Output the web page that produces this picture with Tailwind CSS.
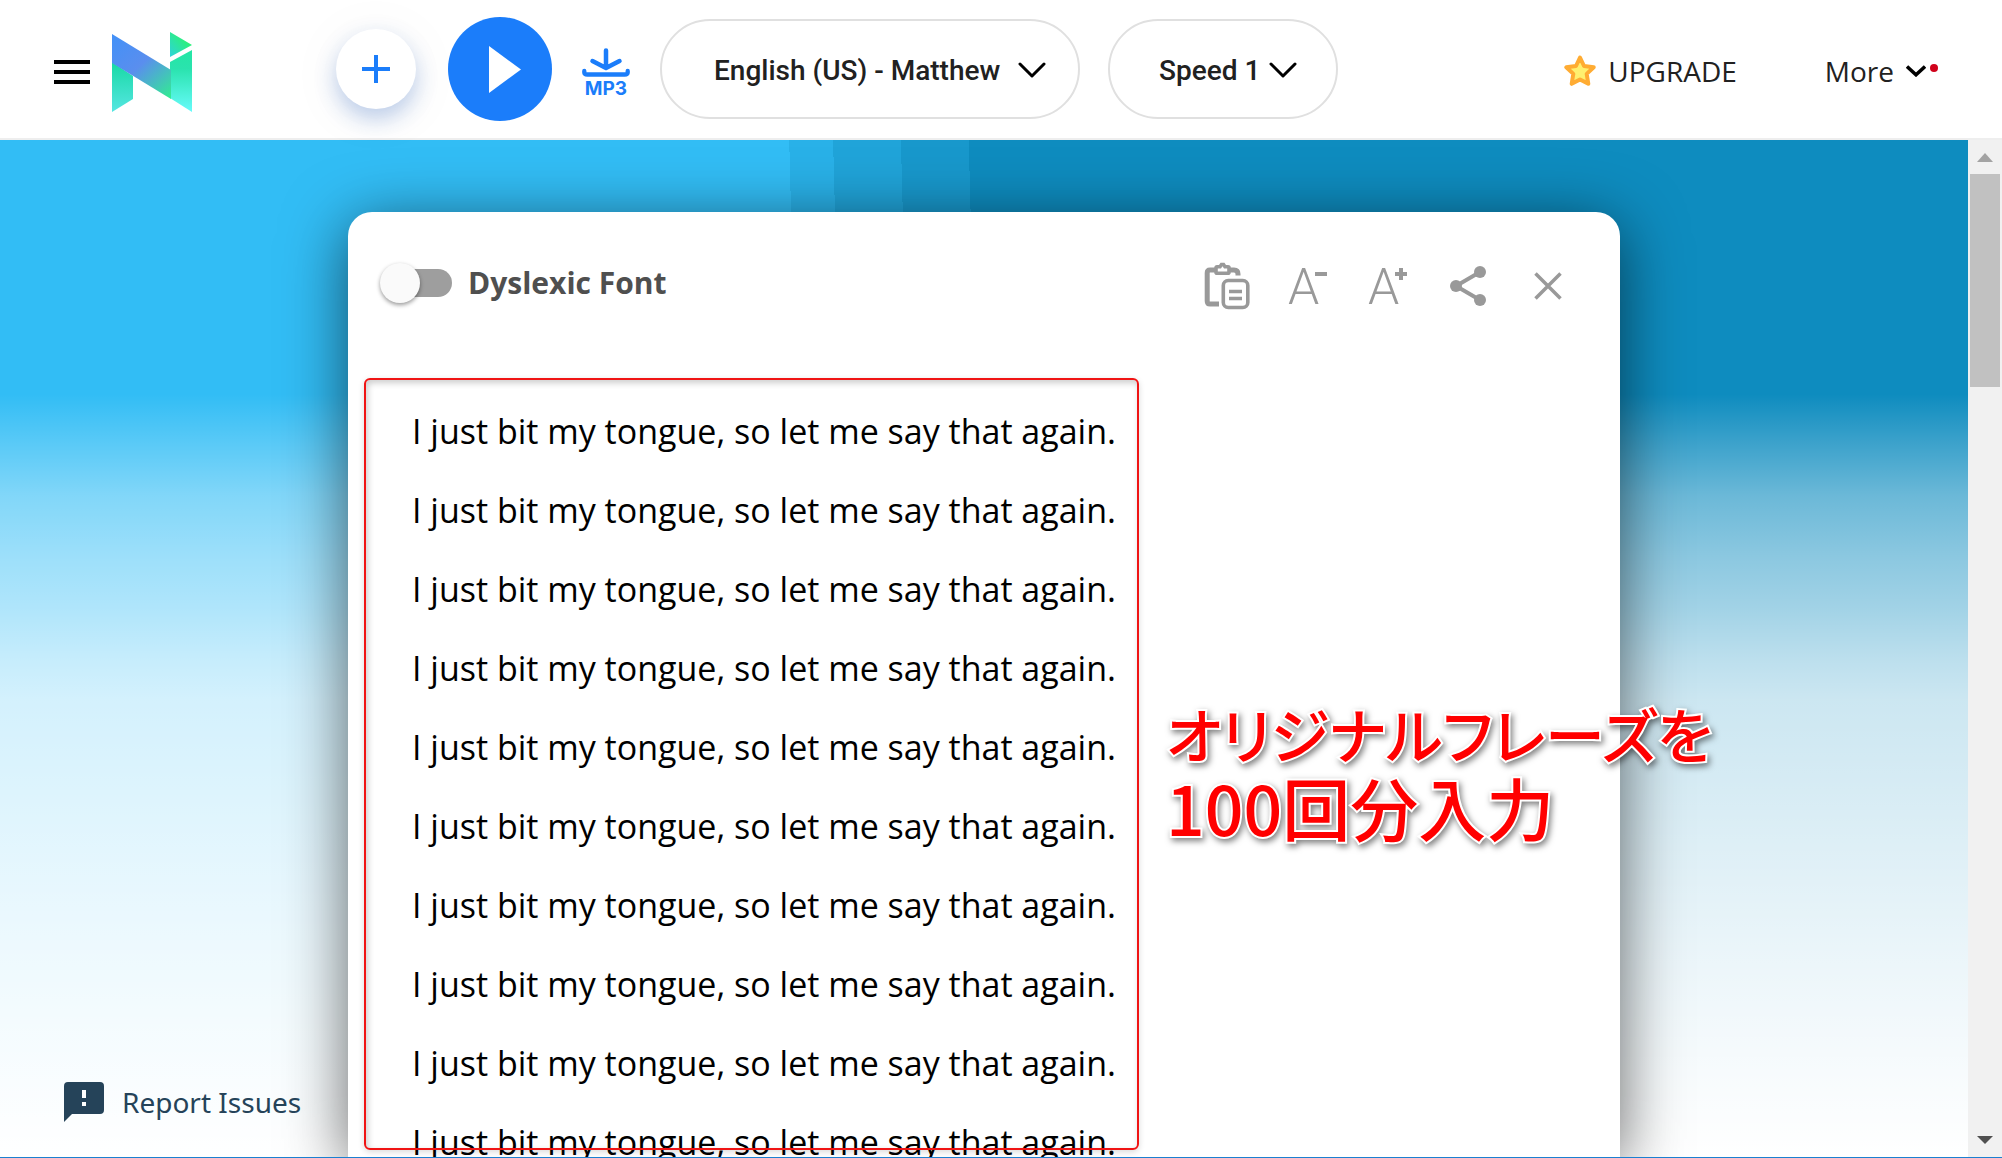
<!DOCTYPE html>
<html lang="en">
<head>
<meta charset="utf-8">
<meta name="viewport" content="width=device-width, initial-scale=1">
<title>Text to speech reader</title>
<script src="https://cdn.jsdelivr.net/npm/@tailwindcss/browser@4"></script>
</head>
<body class="flex h-screen flex-col overflow-hidden bg-white font-['Open_Sans',sans-serif]">

<header class="relative z-10 flex h-[140px] shrink-0 items-center border-b-2 border-[#eeeeee] bg-white pl-[54px] pr-16">
  <div class="flex items-center gap-[22px] pt-1.5">
    <button type="button" aria-label="Menu" class="flex w-9 flex-col gap-1.5">
      <span class="h-1 w-full bg-black"></span>
      <span class="h-1 w-full bg-black"></span>
      <span class="h-1 w-full bg-black"></span>
    </button>
    <a href="#" aria-label="Home">
      <svg class="size-20" viewBox="0 0 80 80">
        <defs>
          <linearGradient id="band" x1="0" y1="0" x2="59" y2="64" gradientUnits="userSpaceOnUse"><stop offset="0" stop-color="#4191f8"/><stop offset=".5" stop-color="#5a8eee"/><stop offset="1" stop-color="#33ea94"/></linearGradient>
          <linearGradient id="left" x1="0" y1="0" x2="0" y2="1"><stop offset="0" stop-color="#17d9a4"/><stop offset="1" stop-color="#56e6e2"/></linearGradient>
          <linearGradient id="right" x1="0" y1="0" x2="0" y2="1"><stop offset="0" stop-color="#24e6a4"/><stop offset=".3" stop-color="#2ae3ae"/><stop offset="1" stop-color="#68fbfb"/></linearGradient>
          <linearGradient id="tip" x1="1" y1="0" x2="0" y2="1"><stop offset=".3" stop-color="#2bf07c"/><stop offset="1" stop-color="#2fd3dc"/></linearGradient>
        </defs>
        <path fill="url(#left)" d="M0 30 21 44v23L0 80z"/>
        <path fill="url(#right)" d="M58 30 80 18v62L58 66z"/>
        <path fill="url(#band)" d="M0 2 59 38v29L0 31z"/>
        <path fill="url(#tip)" d="M58 0 80 13 58 25z"/>
      </svg>
    </a>
  </div>

  <div class="ml-36 flex items-center">
    <button type="button" aria-label="New" class="flex size-20 items-center justify-center rounded-full bg-white shadow-[0_10px_22px_rgba(30,90,190,0.28),0_6px_60px_rgba(0,0,0,0.05)]">
      <svg class="size-7" viewBox="0 0 28 28" fill="none" stroke="#1b7dfa" stroke-width="4"><path d="M14 0v28M0 14h28"/></svg>
    </button>
    <button type="button" aria-label="Play" class="ml-8 flex size-[104px] items-center justify-center rounded-full bg-[#1b7dfa]">
      <svg class="ml-2.5 h-[47px] w-8" viewBox="0 0 32 47" fill="#fff"><path d="M0 0 32 23.500 0 47z"/></svg>
    </button>
    <button type="button" class="ml-[30px] flex w-12 flex-col items-center pt-2 text-[#1b7dfa]">
      <svg class="h-[29px] w-12" viewBox="0 0 48 29" fill="none" stroke="currentColor" stroke-linecap="round" stroke-linejoin="round" stroke-width="4.500"><path d="M24 2.500V20M10.500 13 24 20l13.500-7" /><path d="M2.300 23v1.500q0 2 3 2h37.400q3 0 3-2V23" stroke-width="4.300"/></svg>
      <span class="pt-0.5 font-[Inter,sans-serif] text-[19px] leading-5 font-bold">MP3</span>
    </button>
    <div class="relative ml-[30px]">
      <select aria-label="Voice" class="h-[100px] w-[420px] appearance-none rounded-full border-2 border-[#e0e0e0] bg-white pt-1 pl-[52px] font-[Roboto,sans-serif] text-[28px] font-medium text-[#212121]"><option>English (US) - Matthew</option></select>
      <svg class="pointer-events-none absolute top-[43px] right-[34px] h-4 w-7" viewBox="0 0 28 16" fill="none" stroke="#000" stroke-width="3" stroke-linecap="round" stroke-linejoin="round"><path d="M2 2l12 12L26 2"/></svg>
    </div>
    <div class="relative ml-7">
      <select aria-label="Speed" class="h-[100px] w-[230px] appearance-none rounded-full border-2 border-[#e0e0e0] bg-white pt-1 pl-[49px] font-[Roboto,sans-serif] text-[28px] font-medium text-[#212121]"><option>Speed 1</option></select>
      <svg class="pointer-events-none absolute top-[43px] right-[41px] h-4 w-7" viewBox="0 0 28 16" fill="none" stroke="#000" stroke-width="3" stroke-linecap="round" stroke-linejoin="round"><path d="M2 2l12 12L26 2"/></svg>
    </div>
  </div>

  <nav class="ml-auto flex items-center gap-[88px] pt-1 text-[28px] leading-10 text-[#212121]">
    <a href="#" class="flex items-center gap-3">
      <svg class="size-8" viewBox="0 0 32 32" fill="#fff06f" stroke="#ffac33" stroke-width="4" stroke-linejoin="round"><path d="M16 2.500l4 8.500 9.700 1.300-7 6.600 1.600 9.900L16 24.400l-8.300 4.400 1.600-9.900-7-6.600L12 11z"/></svg>
      UPGRADE
    </a>
    <button type="button" class="flex items-center">
      More
      <svg class="ml-3 h-3 w-5" viewBox="0 0 20 12" fill="none" stroke="#000" stroke-width="3.500"><path d="M1 1.500 10 9.800l9-8.300"/></svg>
      <span class="mb-1.5 ml-1 size-2 rounded-full bg-[#d0021b]"></span>
    </button>
  </nav>
</header>

<div class="flex min-h-0 flex-1">
  <main class="relative flex min-w-0 flex-1 justify-center overflow-hidden bg-[linear-gradient(to_bottom,transparent_25%,rgba(255,255,255,0.2)_30%,rgba(255,255,255,0.39)_35%,rgba(255,255,255,0.52)_41%,rgba(255,255,255,0.61)_46%,rgba(255,255,255,0.72)_51%,rgba(255,255,255,0.79)_55%,rgba(255,255,255,0.87)_71%,rgba(255,255,255,0.92)_81%,rgba(255,255,255,0.97)_92%,white_100%),linear-gradient(88.500deg,#32bdf5_40.900%,#29b1e8_40.900%,#29b1e8_43.100%,#20a4d9_43.100%,#20a4d9_46.500%,#1898cc_46.500%,#1898cc_49.900%,#0e8cbf_49.900%)] pt-[72px]">

    <section class="relative flex w-[1272px] shrink-0 flex-col rounded-t-3xl bg-white shadow-[0_12px_64px_rgba(0,0,0,0.6)]">
      <div class="flex items-center justify-between pt-[50px] pr-[58px] pl-8">
        <label class="-mt-1.5 flex items-center gap-4 text-[30px] leading-10 font-bold text-[#4f4f4f]">
          <span class="relative flex h-10 w-[72px] items-center">
            <input type="checkbox" role="switch" class="peer ml-1 h-7 w-[68px] appearance-none rounded-full bg-[#9e9e9e]">
            <span class="absolute left-0 size-10 rounded-full bg-[#fafafa] shadow-[0_2px_4px_rgba(0,0,0,0.4)] peer-checked:left-8"></span>
          </span>
          Dyslexic Font
        </label>
        <div class="flex items-center text-[#999999]">
          <button type="button" aria-label="Paste" class="w-[46px]">
            <svg class="h-12 w-[46px]" viewBox="0 0 46 48" fill="none" stroke="currentColor" stroke-width="3.600">
              <path stroke-width="5" d="M15 42H6q-2.800 0-2.800-3V11q0-3 2.800-3h6M24 8h6q4 0 4 4v1.500"/>
              <path d="M13 4.800h3l1.500-2.300h2l1.500 2.300h3q1 0 1 1v4.500q0 1-1 1H13q-1 0-1-1V5.800q0-1 1-1z"/>
              <rect x="19.300" y="18.500" width="24.500" height="27" rx="5"/>
              <path d="M25 29.500h13M25 36.500h13"/>
            </svg>
          </button>
          <button type="button" aria-label="Smaller text" class="ml-[38px] flex h-12 w-10 font-[Roboto,sans-serif] text-[50px] leading-[50px] font-light">
            A<svg class="-ml-1 mt-1.5 size-3 shrink-0" viewBox="0 0 12 12" fill="none" stroke="currentColor" stroke-width="4"><path d="M0 6h12"/></svg>
          </button>
          <button type="button" aria-label="Larger text" class="ml-10 flex h-12 w-10 font-[Roboto,sans-serif] text-[50px] leading-[50px] font-light">
            A<svg class="-ml-1 mt-1.5 size-3 shrink-0" viewBox="0 0 12 12" fill="none" stroke="currentColor" stroke-width="4"><path d="M0 6h12M6 0v12"/></svg>
          </button>
          <button type="button" aria-label="Share" class="ml-[42px]">
            <svg class="h-10 w-9" viewBox="0 0 36 40" fill="currentColor"><path d="M30 6 6 20l24 14" fill="none" stroke="currentColor" stroke-width="4"/><circle cx="30" cy="6" r="6"/><circle cx="6" cy="20" r="6"/><circle cx="30" cy="34" r="6"/></svg>
          </button>
          <button type="button" aria-label="Close" class="ml-12">
            <svg class="size-7" viewBox="0 0 28 28" fill="none" stroke="currentColor" stroke-width="3.500"><path d="M1.500 1.500l25 25M26.500 1.500l-25 25"/></svg>
          </button>
        </div>
      </div>
      <textarea aria-label="Text to read" wrap="off" class="mt-[82px] min-h-0 w-[816px] flex-1 resize-none overflow-hidden pl-16 text-[34px] leading-[79px] text-black outline-none">I just bit my tongue, so let me say that again.
I just bit my tongue, so let me say that again.
I just bit my tongue, so let me say that again.
I just bit my tongue, so let me say that again.
I just bit my tongue, so let me say that again.
I just bit my tongue, so let me say that again.
I just bit my tongue, so let me say that again.
I just bit my tongue, so let me say that again.
I just bit my tongue, so let me say that again.
I just bit my tongue, so let me say that again.</textarea>

      <div class="pointer-events-none absolute top-[166px] bottom-[7px] left-4 w-[775px] rounded-md border-2 border-[#f01414] shadow-[0_2px_6px_rgba(0,0,0,0.15),inset_2px_3px_6px_rgba(0,0,0,0.2)]"></div>
      <p class="pointer-events-none absolute top-[484px] left-[818px] font-['Noto_Sans_CJK_JP',sans-serif] leading-[74px] font-medium whitespace-nowrap text-[#ff0000] [font-feature-settings:'palt'] [paint-order:stroke_fill] [-webkit-text-stroke:4px_white] [filter:drop-shadow(2px_3px_3px_rgba(0,0,0,0.5))]">
        <span class="block text-[60px]">オリジナルフレーズを</span>
        <span class="block text-[68px]">100回分入力</span>
      </p>
    </section>

    <a href="#" class="absolute bottom-7 left-16 flex items-center gap-[18px] font-['Noto_Sans',sans-serif] text-[28px] leading-[54px] text-[#254359]">
      <svg class="size-10" viewBox="0 0 40 40" fill="#254359"><path d="M4 0h32q4 0 4 4v24q0 4-4 4H8l-8 8V4q0-4 4-4z"/><path fill="#fff" d="M18 8h4v8h-4zM18 20h4v4h-4z"/></svg>
      Report Issues
    </a>
  </main>

  <aside aria-hidden="true" class="flex w-[34px] shrink-0 flex-col items-center bg-[#f1f1f1]">
    <svg class="h-[34px] w-4 shrink-0" viewBox="0 0 16 34" fill="#a3a3a3"><path d="M8 13l8 9H0z"/></svg>
    <div class="h-[213px] w-[30px] bg-[#c1c1c1]"></div>
    <svg class="mt-auto h-[34px] w-4 shrink-0" viewBox="0 0 16 34" fill="#505050"><path d="M0 13h16l-8 8z"/></svg>
  </aside>
</div>
<div class="h-px shrink-0 bg-[#1b80d0]"></div>
</body>
</html>
